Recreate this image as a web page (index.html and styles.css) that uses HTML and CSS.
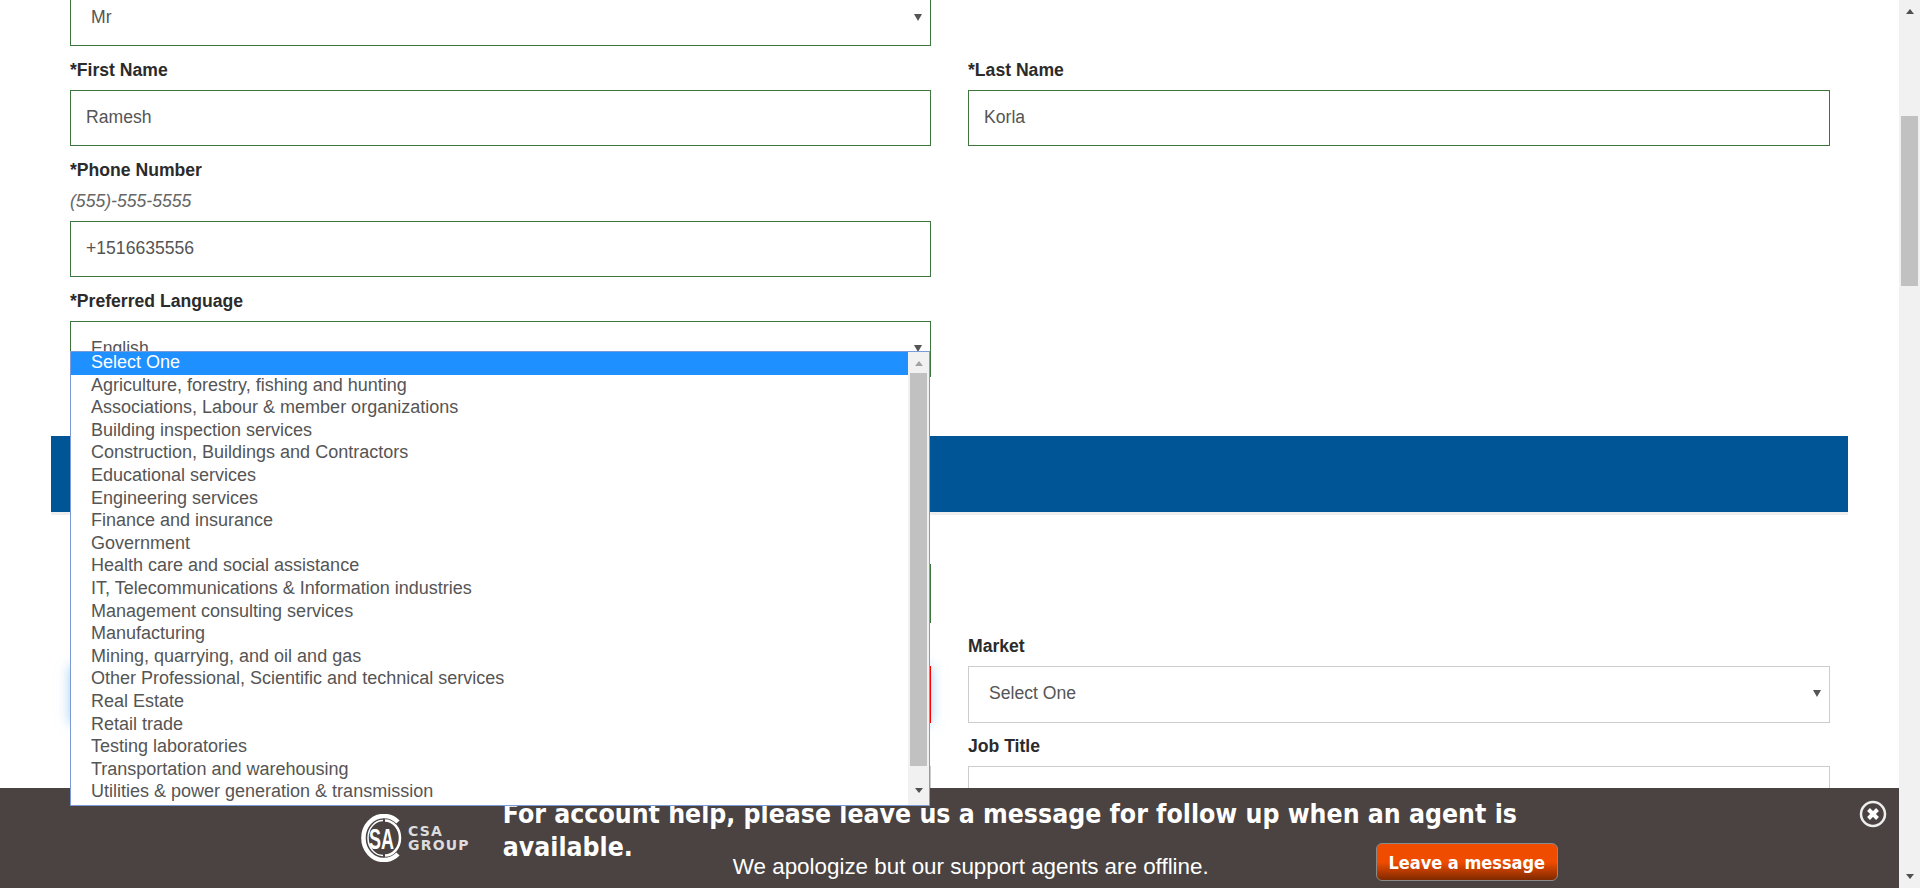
FILE: index.html
```html
<!DOCTYPE html>
<html>

<head>
  <title>Create Account</title>
  <link rel="stylesheet" href="styles.css">
</head>

<body>
  <div class="page">
    <div class="content">
      <div class="form-grid">
        <div class="field">
          <div class="select select-cut"><span>Mr</span><i class="caret"></i></div>
        </div>
        <div class="field"></div>

        <div class="field">
          <label>*First Name</label>
          <div class="input valid">Ramesh</div>
        </div>
        <div class="field">
          <label>*Last Name</label>
          <div class="input valid">Korla</div>
        </div>

        <div class="field">
          <label>*Phone Number</label>
          <p class="hint">(555)-555-5555</p>
          <div class="input valid">+1516635556</div>
        </div>
        <div class="field"></div>

        <div class="field">
          <label>*Preferred Language</label>
          <div class="select valid"><span>English</span><i class="caret"></i></div>
        </div>
        <div class="field"></div>
      </div>

      <div class="band"></div>

      <div class="form-grid lower">
        <div class="field field-span">
          <div class="input tall valid half"></div>
        </div>
        <div class="field">
          <label></label>
          <div class="select invalid"><i class="caret"></i></div>
        </div>
        <div class="field">
          <label>Market</label>
          <div class="select plain"><span>Select One</span><i class="caret"></i></div>
        </div>
        <div class="field">
          <label></label>
          <div class="input plain"></div>
        </div>
        <div class="field">
          <label>Job Title</label>
          <div class="input plain"></div>
        </div>
      </div>

      <ul class="dropdown">
        <li class="selected">Select One</li>
        <li>Agriculture, forestry, fishing and hunting</li>
        <li>Associations, Labour &amp; member organizations</li>
        <li>Building inspection services</li>
        <li>Construction, Buildings and Contractors</li>
        <li>Educational services</li>
        <li>Engineering services</li>
        <li>Finance and insurance</li>
        <li>Government</li>
        <li>Health care and social assistance</li>
        <li>IT, Telecommunications &amp; Information industries</li>
        <li>Management consulting services</li>
        <li>Manufacturing</li>
        <li>Mining, quarrying, and oil and gas</li>
        <li>Other Professional, Scientific and technical services</li>
        <li>Real Estate</li>
        <li>Retail trade</li>
        <li>Testing laboratories</li>
        <li>Transportation and warehousing</li>
        <li>Utilities &amp; power generation &amp; transmission</li>
        <li class="list-bar">
          <b class="arrow-up small"></b>
          <b class="list-thumb"></b>
          <b class="arrow-down small"></b>
        </li>
      </ul>
    </div>

    <div class="scrollbar">
      <b class="arrow-up"></b>
      <b class="thumb"></b>
      <b class="arrow-down"></b>
    </div>
  </div>

  <div class="chat">
    <div class="logo">
      <svg width="42" height="48" viewBox="0 0 42 48">
        <path d="M37 8 A20.5 22 0 1 0 37 40" fill="none" stroke="#fff" stroke-width="4.5"/>
        <path d="M24 6.5 A15 17.5 0 0 1 24 41.5" fill="none" stroke="#fff" stroke-width="2.5"/>
        <path d="M22 6.5 A15 17.5 0 0 0 22 41.5" fill="none" stroke="#fff" stroke-width="1.5"/>
        <text x="0" y="0" transform="translate(8 35) scale(0.62 1)" class="logo-sa">S</text>
        <text x="0" y="0" transform="translate(20 35) scale(0.62 1)" class="logo-sa">A</text>
      </svg>
      <div class="logo-text">CSA<br>GROUP</div>
    </div>
    <div class="chat-body">
      <h2>
        <span>For account help, please leave us a message for follow up when an agent is</span>
        <span>available.</span>
      </h2>
      <div class="chat-row">
        <p>We apologize but our support agents are offline.</p>
        <button class="leave">Leave a message</button>
      </div>
    </div>
    <svg class="close" width="28" height="28" viewBox="0 0 28 28">
      <circle cx="14" cy="14" r="12" fill="#4a4341" stroke="#eee" stroke-width="2.5"/>
      <path d="M9.5 9.5 L18.5 18.5 M18.5 9.5 L9.5 18.5" stroke="#fff" stroke-width="4"/>
    </svg>
  </div>
</body>

</html>
```

FILE: styles.css
```css
* {
  box-sizing: border-box;
}

html,
body {
  margin: 0;
  height: 888px;
  overflow: hidden;
}

body {
  position: relative;
  font-family: "Liberation Sans", Arial, sans-serif;
  font-size: 17.6px;
  color: #555;
  background: #fff;
}

.page {
  display: flex;
  height: 888px;
}

.content {
  position: relative;
  flex: 1;
  padding: 0 70px;
  overflow: hidden;
}

/* form */
.form-grid {
  display: grid;
  grid-template-columns: 861px 862px;
  column-gap: 37px;
  row-gap: 14px;
}

.field label {
  display: block;
  height: 20px;
  margin-bottom: 10px;
  line-height: 20px;
  font-weight: bold;
  color: #2b2b2b;
}

.hint {
  height: 21px;
  margin: 0 0 10px;
  padding-top: 1px;
  line-height: 20px;
  font-style: italic;
  color: #666;
}

.input,
.select {
  display: flex;
  align-items: center;
  height: 56px;
  padding: 0 15px 2px;
  border: 1px solid #ccc;
}

.select {
  justify-content: space-between;
  padding: 0 8px 2px 20px;
}

.select-cut {
  height: 46px;
  padding-bottom: 10px;
  border-top: 0;
}

.valid,
.select-cut {
  border-color: #3c763d;
}

.invalid {
  border-color: #f00;
  box-shadow: 0 0 12px rgba(102, 175, 233, 0.6);
}

.caret {
  width: 0;
  height: 0;
  margin-left: auto;
  border-left: 4px solid transparent;
  border-right: 4px solid transparent;
  border-top: 7px solid #555;
}

.band {
  height: 76px;
  margin: 59px -19px 0;
  background: #005596;
  box-shadow: 0 3px 0 #eee;
}

.lower {
  margin-top: 52px;
  row-gap: 13px;
}

.lower .input,
.lower .select {
  height: 57px;
}

.field-span {
  grid-column: 1 / 3;
}

.lower .tall {
  height: 59px;
}

.half {
  width: 861px;
}

/* open list */
.dropdown {
  position: absolute;
  z-index: 2;
  top: 351px;
  left: 70px;
  width: 860px;
  height: 455px;
  margin: 0;
  padding: 0 21px 0 0;
  list-style: none;
  font-size: 18px;
  line-height: 21px;
  background: #fff;
  border: 1px solid #7b9ad6;
}

.dropdown li {
  height: 22.6px;
  padding-left: 20px;
  white-space: nowrap;
}

.dropdown .selected {
  background: #1e90ff;
  color: #fff;
}

.dropdown .list-bar {
  position: absolute;
  top: 0;
  right: 0;
  display: flex;
  flex-direction: column;
  align-items: center;
  width: 21px;
  height: 453px;
  padding: 0;
  background: #f1f1f1;
}

.list-thumb {
  width: 17px;
  height: 393px;
  margin: 7px 0 22px;
  background: #c1c1c1;
}

/* page scrollbar */
.scrollbar {
  display: flex;
  flex-direction: column;
  align-items: center;
  width: 21px;
  background: #f1f1f1;
}

.thumb {
  width: 17px;
  height: 170px;
  margin: 102px 0 588px;
  background: #c1c1c1;
}

.arrow-up,
.arrow-down {
  width: 0;
  height: 0;
  border-left: 4.5px solid transparent;
  border-right: 4.5px solid transparent;
}

.arrow-up {
  margin-top: 9px;
  border-bottom: 5px solid #505050;
}

.arrow-down {
  border-top: 5px solid #505050;
}

.small.arrow-up {
  margin-top: 9px;
  border-bottom-color: #a3a3a3;
}

.small.arrow-down {
  border-top-color: #505050;
}

/* chat bar */
.chat {
  position: absolute;
  left: 0;
  bottom: 0;
  display: flex;
  width: 1899px;
  height: 100px;
  background: #4a4341;
  color: #fff;
}

.logo {
  display: flex;
  align-items: center;
  gap: 5px;
  height: 48px;
  margin: 26px 0 0 361px;
}

.logo-sa {
  font-family: "Liberation Sans", Arial, sans-serif;
  font-size: 29px;
  font-weight: bold;
  fill: #fff;
}

.logo-text {
  font-family: "DejaVu Sans", sans-serif;
  font-size: 14px;
  font-weight: bold;
  letter-spacing: 1.2px;
  line-height: 14px;
  color: #ddd;
}

.chat-body {
  width: 1060px;
  margin-left: 33px;
}

.chat-body h2 {
  height: 45px;
  margin: 10px 0 0;
  font-family: "DejaVu Sans Condensed", "DejaVu Sans", sans-serif;
  font-stretch: condensed;
  font-size: 26.4px;
  line-height: 32.5px;
  font-weight: bold;
}

.chat-body h2 span {
  display: block;
  width: max-content;
}

.chat-row {
  display: flex;
}

.chat-row p {
  margin: 11px 0 0 230px;
  font-size: 22.4px;
  line-height: 26px;
}

.leave {
  flex: none;
  width: 182px;
  height: 38px;
  margin: 0 0 0 167px;
  font-family: "DejaVu Sans Condensed", "DejaVu Sans", sans-serif;
  font-stretch: condensed;
  font-size: 18px;
  font-weight: bold;
  color: #fff;
  background: linear-gradient(#f04c00 50%, #7f2a00);
  border: 1px solid #8a8a8a;
  border-radius: 6px;
}

.close {
  margin: 12px 12px 0 auto;
}
```
